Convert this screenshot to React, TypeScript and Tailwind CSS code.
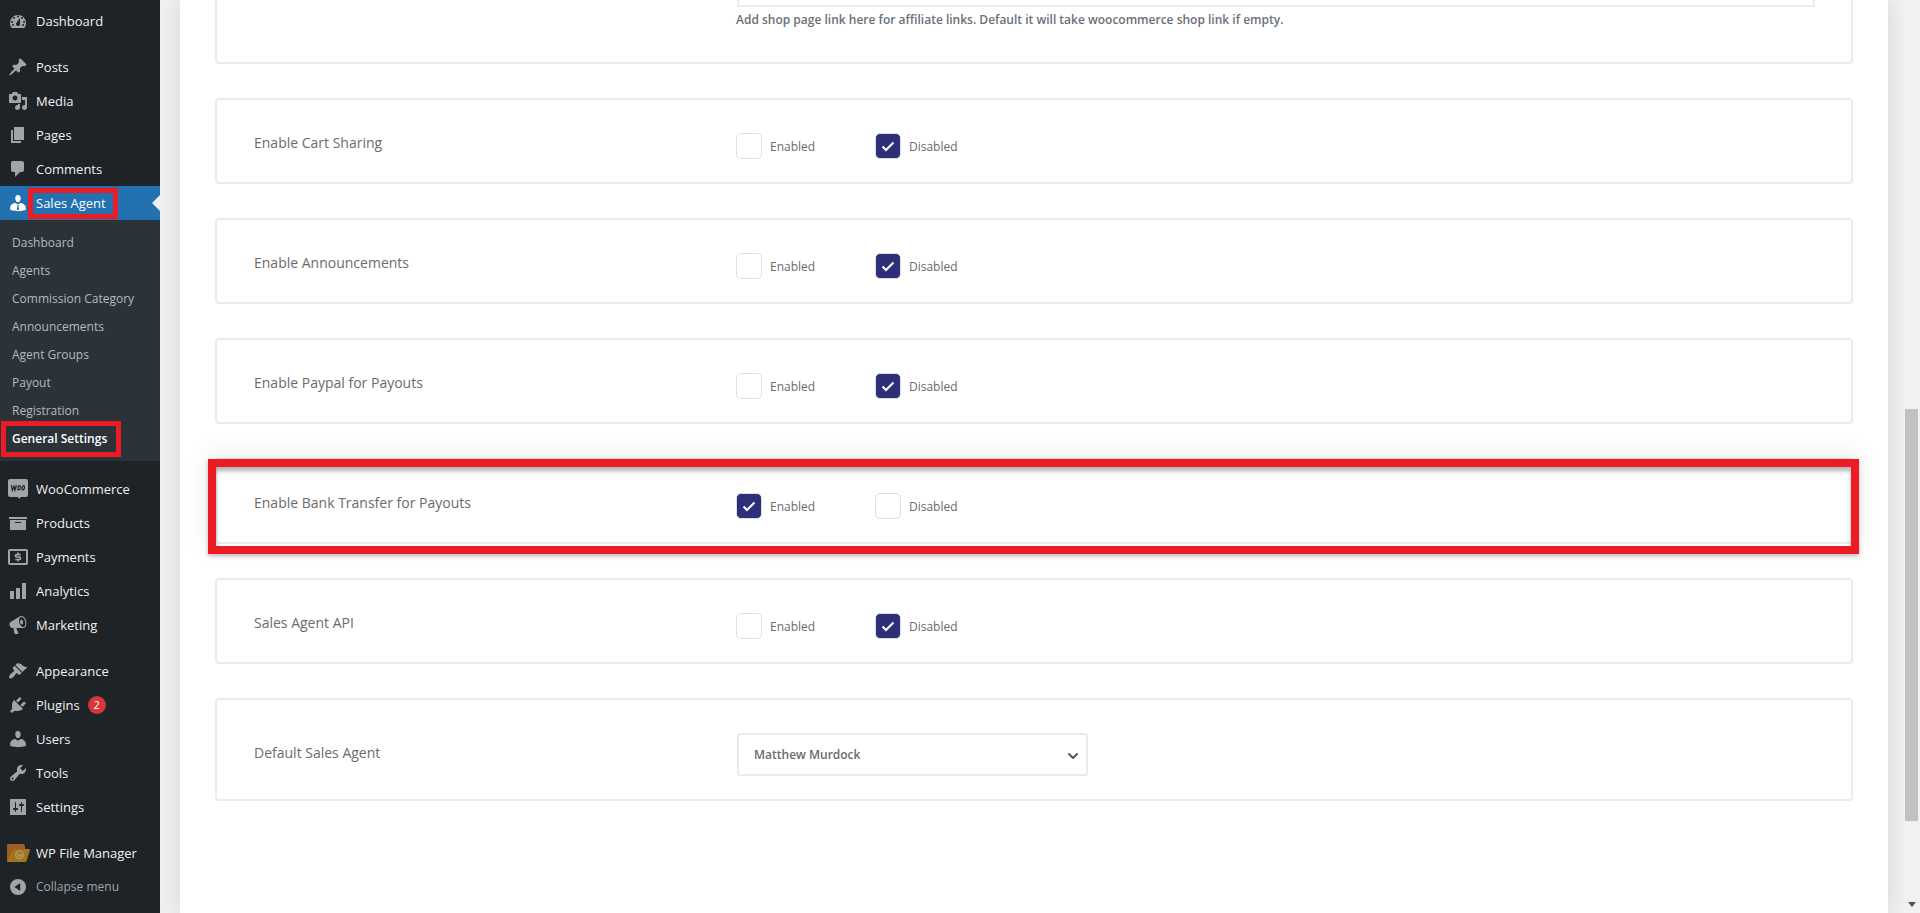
import { useState, type ReactNode } from "react";
import { ChevronDown } from "lucide-react";

const paths = {
  dashboard:
    "M3.76 17h12.48A7.9 7.9 0 0 0 18 12a8 8 0 0 0-16 0c0 1.94.66 3.64 1.76 5zM10 4.5a1 1 0 1 1 0 2 1 1 0 0 1 0-2zM6 6a1 1 0 1 1 0 2 1 1 0 0 1 0-2zm8 0a1 1 0 1 1 0 2 1 1 0 0 1 0-2zm-5.37 5.55L12 7v6a2 2 0 1 1-3.37-1.45zM4 10a1 1 0 1 1 0 2 1 1 0 0 1 0-2zm12 0a1 1 0 1 1 0 2 1 1 0 0 1 0-2zM5 13a1 1 0 1 1 0 2 1 1 0 0 1 0-2zm10 0a1 1 0 1 1 0 2 1 1 0 0 1 0-2z",
  posts:
    "M10.44 3.02l1.82-1.82 6.36 6.35-1.83 1.82c-1.05-.68-2.48-.57-3.41.36l-.75.75c-.92.93-1.04 2.35-.35 3.41l-1.83 1.82-2.41-2.41-2.8 2.79c-.42.42-3.38 2.71-3.8 2.29s1.86-3.39 2.28-3.81l2.79-2.79L4.1 9.36l1.83-1.82c1.05.69 2.48.57 3.4-.36l.75-.75c.93-.92 1.05-2.35.36-3.41z",
  media:
    "M13 11V4c0-.55-.45-1-1-1h-1.67L9 1H5L3.67 3H2c-.55 0-1 .45-1 1v7c0 .55.45 1 1 1h10c.55 0 1-.45 1-1zM7 4.5c1.38 0 2.5 1.12 2.5 2.5S8.38 9.5 7 9.5 4.5 8.38 4.5 7 5.62 4.5 7 4.5zM14 6h5v10.5c0 1.38-1.12 2.5-2.5 2.5S14 17.88 14 16.5s1.12-2.5 2.5-2.5c.17 0 .34.02.5.05V9h-3V6zm-4 8.05V13h2v3.5c0 1.38-1.12 2.5-2.5 2.5S7 17.88 7 16.5 8.12 14 9.5 14c.17 0 .34.02.5.05z",
  pages: "M6 15V2h10v13H6zm-1 1h8v2H3V5h2v11z",
  comments: "M5 2h9c1.1 0 2 .9 2 2v7c0 1.1-.9 2-2 2h-2l-5 5v-5H5c-1.1 0-2-.9-2-2V4c0-1.1.9-2 2-2z",
  agent:
    "M10 9.25c-2.27 0-2.73-3.44-2.73-3.44C7 4.02 7.82 2 9.97 2c2.16 0 2.98 2.02 2.71 3.81 0 0-.41 3.44-2.68 3.44zM7.23 10L10 11.4 12.72 10c2.39 0 5.1 2.33 5.1 4.53v2.49S13.6 18.15 10 18.15c-3.65 0-7.8-1.13-7.8-1.13v-2.49c0-2.25 2.5-4.53 5.03-4.53zM9.2 12l.3 1-.6 3.4L10 17.5l1.1-1.1-.6-3.4.3-1z",
  archive: "M19 4v2H1V4h18zM2 7h16v10H2V7zm11 3V9H7v1h6z",
  chart: "M18 18V2h-4v16h4zm-6 0V7H8v11h4zm-6 0v-8H2v8h4z",
  megaphone:
    "M18.15 5.94c.46 1.62.38 3.22-.02 4.48-.42 1.28-1.26 2.18-2.3 2.48-.16.06-.26.06-.4.06-.06.02-.12.02-.18.02-.06.02-.14.02-.22.02h-6.8l2.22 5.5c.02.14-.06.26-.14.34-.08.1-.24.16-.34.16H6.95c-.1 0-.26-.06-.34-.16-.08-.08-.16-.2-.14-.34l-1-5.5H4.25l-.02-.02c-.5.06-1.08-.18-1.54-.62s-.88-1.08-1.06-1.88c-.24-.8-.2-1.56-.02-2.2.18-.62.58-1.08 1.06-1.3l.02-.02 9-5.4c.1-.06.18-.1.24-.16.06-.04.14-.08.24-.12.16-.08.28-.12.5-.18 1.04-.3 2.24.1 3.22.98s1.84 2.24 2.26 3.86zm-2.58 5.98h-.02c.4-.1.74-.34 1.04-.7.58-.7.86-1.76.86-3.04 0-.64-.1-1.3-.28-1.98-.34-1.36-1.02-2.5-1.78-3.24s-1.68-1.1-2.46-.88c-.82.22-1.4.96-1.7 2-.32 1.04-.28 2.36.06 3.72.38 1.36 1 2.5 1.8 3.24.78.74 1.62 1.1 2.48.88zm-2.54-7.08c.22-.04.42-.02.62.04.38.16.76.48 1.02 1s.42 1.2.42 1.78c0 .3-.04.56-.12.8-.18.48-.44.84-.86.94-.34.1-.8-.06-1.14-.4s-.64-.86-.78-1.5c-.18-.62-.12-1.24.02-1.72s.48-.84.82-.94z",
  brush:
    "M14.48 11.06L7.41 3.99l1.5-1.5c.5-.56 2.3-.47 3.51.32 1.21.8 1.43 1.28 2.91 2.1 1.18.64 2.45 1.26 4.45.85zm-.71.71L6.7 4.7 4.93 6.47c-.39.39-.39 1.02 0 1.41l1.06 1.06c.39.39.39 1.03 0 1.42-.6.6-1.43 1.11-2.21 1.69-.35.26-.7.53-1.01.84C1.43 14.23.4 16.08 1.4 17.07c.99 1 2.84-.03 4.18-1.36.31-.31.58-.66.85-1.02.57-.78 1.08-1.61 1.69-2.21.39-.39 1.02-.39 1.41 0l1.06 1.06c.39.39 1.02.39 1.41 0z",
  plug: "M13.11 4.36L9.87 7.6 8 5.73l3.24-3.24c.35-.34 1.05-.2 1.56.32.52.51.66 1.21.31 1.55zm-8 1.77l.91-1.12 9.01 9.01-1.19.84c-.71.71-2.63 1.16-3.82 1.16H6.14L4.9 17.26c-.59.59-1.54.59-2.12 0-.59-.58-.59-1.53 0-2.12l1.24-1.24v-3.88c0-1.13.4-3.19 1.09-3.89zm7.26 3.97l3.24-3.24c.34-.35 1.04-.21 1.55.31.52.51.66 1.21.31 1.55l-3.24 3.25z",
  user: "M10 9.25c-2.27 0-2.73-3.44-2.73-3.44C7 4.02 7.82 2 9.97 2c2.16 0 2.98 2.02 2.71 3.81 0 0-.41 3.44-2.68 3.44zm0 2.57L12.72 10c2.39 0 5.1 2.33 5.1 4.53v2.49S13.6 18.15 10 18.15c-3.65 0-7.8-1.13-7.8-1.13v-2.49c0-2.25 2.5-4.48 5.03-4.48z",
  wrench:
    "M16.68 9.77c-1.34 1.34-3.3 1.67-4.95.99l-5.41 6.52c-.99.99-2.59.99-3.58 0s-.99-2.59 0-3.57l6.52-5.42c-.68-1.65-.35-3.61.99-4.95 1.28-1.28 3.12-1.62 4.72-1.06l-2.89 2.89 2.82 2.82 2.86-2.87c.53 1.58.18 3.39-1.08 4.65zM3.81 16.21c.4.39 1.04.39 1.43 0 .4-.4.4-1.04 0-1.43-.39-.4-1.03-.4-1.43 0-.39.39-.39 1.03 0 1.43z",
  sliders:
    "M18 17V3c0-.55-.45-1-1-1H3c-.55 0-1 .45-1 1v14c0 .55.45 1 1 1h14c.55 0 1-.45 1-1zM8 11h1c.55 0 1 .45 1 1s-.45 1-1 1H8v1.5c0 .28-.22.5-.5.5s-.5-.22-.5-.5V13H6c-.55 0-1-.45-1-1s.45-1 1-1h1V5.5c0-.28.22-.5.5-.5s.5.22.5.5V11zm5-2h-1c-.55 0-1-.45-1-1s.45-1 1-1h1V5.5c0-.28.22-.5.5-.5s.5.22.5.5V7h1c.55 0 1 .45 1 1s-.45 1-1 1h-1v5.5c0 .28-.22.5-.5.5s-.5-.22-.5-.5V9z",
  collapse: "M10 2a8 8 0 1 0 0 16 8 8 0 0 0 0-16zm2.2 12L6.5 10l5.7-4z",
};

function Dashicon({ name }: { name: keyof typeof paths }) {
  return (
    <svg className="size-5" viewBox="0 0 20 20" fill="currentColor" fillRule="evenodd" aria-hidden="true">
      <path d={paths[name]} />
    </svg>
  );
}

function WooIcon() {
  return (
    <svg className="size-5" viewBox="0 0 20 20" aria-hidden="true">
      <path d="M2 0h16a2 2 0 0 1 2 2v14a2 2 0 0 1-2 2h-5.5l-.8 2-2.2-2H2a2 2 0 0 1-2-2V2a2 2 0 0 1 2-2z" fill="currentColor" />
      <g fill="none" stroke="#1d2327" strokeWidth="1.2">
        <path d="M3.4 6.2l1 5 1.7-3.8.9 3.8 1.4-5" />
        <ellipse cx="11" cy="8.800" rx="1.200" ry="2.200" transform="rotate(12 11 8.800)" />
        <ellipse cx="15.200" cy="8.800" rx="1.200" ry="2.200" transform="rotate(12 15.200 8.800)" />
      </g>
    </svg>
  );
}

function PaymentsIcon() {
  return (
    <svg className="size-5" viewBox="0 0 20 20" fill="none" stroke="currentColor" aria-hidden="true">
      <rect x="1" y="3" width="18" height="14" rx="1" strokeWidth="2" />
      <path d="M12.7 7.6H8.6c-1.5 0-1.5 2.4 0 2.4h2.8c1.5 0 1.5 2.5 0 2.5H7.3M10 5.5v2M10 12.5v2" strokeWidth="1.700" />
    </svg>
  );
}

function FolderIcon() {
  return (
    <svg className="h-5 w-6" viewBox="0 0 24 20" aria-hidden="true">
      <path d="M1 2a1 1 0 0 1 1-1h16l1 2v12L3 19H1z" fill="#a35b24" />
      <path d="M7.5 6H23a1 1 0 0 1 1 1l-3.5 11a1 1 0 0 1-1 1H1z" fill="#a3741c" />
      <g fill="none" stroke="#b5a27c">
        <circle cx="13.500" cy="12" r="4" />
        <path d="M11 10.5l1.4 3.800 1.2-3.500 1.3 3.500 1.2-3.800" />
      </g>
    </svg>
  );
}

function Marker({ className }: { className: string }) {
  return <span className={`pointer-events-none absolute border-[#ed1c24] ${className}`} aria-hidden="true" />;
}

function MenuItem({ icon, label, badge, active }: { icon: ReactNode; label: string; badge?: string; active?: boolean }) {
  return (
    <li>
      <a
        href="#"
        className={
          active
            ? "relative flex h-[34px] items-center bg-[#2271b1] text-white"
            : "flex h-[34px] items-center text-[#f0f0f1]"
        }
      >
        <span className={active ? "flex w-9 justify-center text-white" : "flex w-9 justify-center text-[#a0a5aa]"}>{icon}</span>
        <span>{label}</span>
        {badge && (
          <span className="ml-2 flex size-[18px] items-center justify-center rounded-full bg-[#d63638] text-[11px] text-white">
            {badge}
          </span>
        )}
        {active && (
          <>
            <Marker className="top-0.5 left-7 h-[31px] w-[90px] border-[5px]" />
            <svg className="absolute top-2 right-0 h-[18px] w-2" viewBox="0 0 8 18" aria-hidden="true">
              <path d="M8 1v16L0 9z" fill="#f0f0f1" />
            </svg>
          </>
        )}
      </a>
    </li>
  );
}

const submenu = [
  "Dashboard",
  "Agents",
  "Commission Category",
  "Announcements",
  "Agent Groups",
  "Payout",
  "Registration",
  "General Settings",
];

function Sidebar() {
  return (
    <nav className="w-40 shrink-0 bg-[#1d2327] pt-1 text-[13px] leading-5 whitespace-nowrap" aria-label="Admin menu">
      <ul>
        <MenuItem icon={<Dashicon name="dashboard" />} label="Dashboard" />
      </ul>
      <ul className="mt-3">
        <MenuItem icon={<Dashicon name="posts" />} label="Posts" />
        <MenuItem icon={<Dashicon name="media" />} label="Media" />
        <MenuItem icon={<Dashicon name="pages" />} label="Pages" />
        <MenuItem icon={<Dashicon name="comments" />} label="Comments" />
        <MenuItem icon={<Dashicon name="agent" />} label="Sales Agent" active />
      </ul>
      <ul className="bg-[#2c3338] pt-[9px] pb-2 text-xs">
        {submenu.map((name) =>
          name === "General Settings" ? (
            <li key={name}>
              <a href="#" className="relative flex h-7 items-center px-3 font-semibold text-white">
                {name}
                <Marker className="-top-1 left-px h-9 w-[120px] border-[5px]" />
              </a>
            </li>
          ) : (
            <li key={name}>
              <a href="#" className="flex h-7 items-center px-3 text-[#b4b9be]">
                {name}
              </a>
            </li>
          ),
        )}
      </ul>
      <ul className="mt-[11px]">
        <MenuItem icon={<WooIcon />} label="WooCommerce" />
        <MenuItem icon={<Dashicon name="archive" />} label="Products" />
        <MenuItem icon={<PaymentsIcon />} label="Payments" />
        <MenuItem icon={<Dashicon name="chart" />} label="Analytics" />
        <MenuItem icon={<Dashicon name="megaphone" />} label="Marketing" />
      </ul>
      <ul className="mt-3">
        <MenuItem icon={<Dashicon name="brush" />} label="Appearance" />
        <MenuItem icon={<Dashicon name="plug" />} label="Plugins" badge="2" />
        <MenuItem icon={<Dashicon name="user" />} label="Users" />
        <MenuItem icon={<Dashicon name="wrench" />} label="Tools" />
        <MenuItem icon={<Dashicon name="sliders" />} label="Settings" />
      </ul>
      <ul className="mt-3">
        <MenuItem icon={<FolderIcon />} label="WP File Manager" />
      </ul>
      <button type="button" className="flex h-[34px] w-full items-center text-xs text-[#a0a5aa]">
        <span className="flex w-9 justify-center">
          <Dashicon name="collapse" />
        </span>
        Collapse menu
      </button>
    </nav>
  );
}

function Option({ name, label, checked, onSelect }: { name: string; label: string; checked: boolean; onSelect: () => void }) {
  return (
    <label className="flex w-[139px] items-center gap-2 text-xs">
      <span className="grid size-[26px] place-items-center">
        <input
          type="radio"
          name={name}
          checked={checked}
          onChange={onSelect}
          className="col-start-1 row-start-1 size-[26px] appearance-none rounded-[5px] border border-[#dcdfe6] bg-white checked:bg-[#2d3078]"
        />
        {checked && (
          <svg
            className="pointer-events-none col-start-1 row-start-1 size-[14px]"
            viewBox="0 0 14 14"
            fill="none"
            stroke="#fff"
            strokeWidth="2"
            aria-hidden="true"
          >
            <path d="M1.5 7.5l3.500 3.500L12.500 3.500" />
          </svg>
        )}
      </span>
      <span className="pt-0.5">{label}</span>
    </label>
  );
}

function ToggleCard({ title, initial, highlighted }: { title: string; initial: boolean; highlighted?: boolean }) {
  const [enabled, setEnabled] = useState(initial);
  return (
    <div
      role="radiogroup"
      aria-label={title}
      className="relative rounded border-2 border-[#ebebeb] pt-[33px] pb-[23px] pl-[37px]"
    >
      <div className="flex items-start">
        <span className="w-[482px] text-sm leading-5 font-medium">{title}</span>
        <Option name={title} label="Enabled" checked={enabled} onSelect={() => setEnabled(true)} />
        <Option name={title} label="Disabled" checked={!enabled} onSelect={() => setEnabled(false)} />
      </div>
      {highlighted && (
        <Marker className="-top-px -right-2 -bottom-3 -left-[9px] border-8 shadow-[0_2px_4px_rgba(0,0,0,0.25),0_-6px_24px_rgba(0,0,0,0.07),inset_0_4px_4px_rgba(0,0,0,0.3)]" />
      )}
    </div>
  );
}

function Settings() {
  return (
    <main className="flex-1 overflow-hidden bg-[#f0f0f1] pr-[15px] pl-5">
      <form className="flex h-full flex-col gap-[34px] bg-white px-[35px] text-[#6b6b6b] shadow-[0_0_20px_rgba(60,30,40,0.13)]">
        <section className="h-16 rounded-b border-2 border-t-0 border-[#ebebeb] pr-9 pl-[520px]">
          <input
            type="text"
            aria-label="Shop page link"
            aria-describedby="shop-hint"
            className="block h-[7px] w-full border-2 border-t-0 border-[#ebebeb]"
          />
          <p id="shop-hint" className="mt-[3px] -ml-px text-xs leading-5 font-semibold text-[#6c7078]">
            Add shop page link here for affiliate links. Default it will take woocommerce shop link if empty.
          </p>
        </section>
        <ToggleCard title="Enable Cart Sharing" initial={false} />
        <ToggleCard title="Enable Announcements" initial={false} />
        <ToggleCard title="Enable Paypal for Payouts" initial={false} />
        <ToggleCard title="Enable Bank Transfer for Payouts" initial highlighted />
        <ToggleCard title="Sales Agent API" initial={false} />
        <section className="flex items-center rounded border-2 border-[#ebebeb] pt-[33px] pb-[23px] pl-[37px]">
          <label htmlFor="default-agent" className="mb-1 w-[483px] text-sm leading-5 font-medium">
            Default Sales Agent
          </label>
          <span className="grid w-[351px] items-center">
            <select
              id="default-agent"
              className="col-start-1 row-start-1 h-[43px] w-full appearance-none rounded-[3px] border-2 border-[#ebebeb] bg-white px-[15px] text-xs font-semibold"
            >
              <option>Matthew Murdock</option>
            </select>
            <ChevronDown
              className="pointer-events-none col-start-1 row-start-1 mt-0.5 mr-[7px] size-4 justify-self-end text-[#50575e]"
              strokeWidth={3}
              aria-hidden="true"
            />
          </span>
        </section>
      </form>
    </main>
  );
}

function ScrollTrack() {
  return (
    <div className="flex w-[17px] shrink-0 flex-col items-center bg-[#f1f1f1]" aria-hidden="true">
      <div className="basis-[409px]" />
      <div className="w-[13px] basis-[412px] bg-[#c1c1c1]" />
      <svg className="mt-auto mb-[6px] h-[5px] w-2" viewBox="0 0 8 5">
        <path d="M0 0h8L4 5z" fill="#505050" />
      </svg>
    </div>
  );
}

export default function App() {
  return (
    <div className="flex h-screen overflow-hidden font-['Open_Sans',sans-serif]">
      <Sidebar />
      <Settings />
      <ScrollTrack />
    </div>
  );
}
